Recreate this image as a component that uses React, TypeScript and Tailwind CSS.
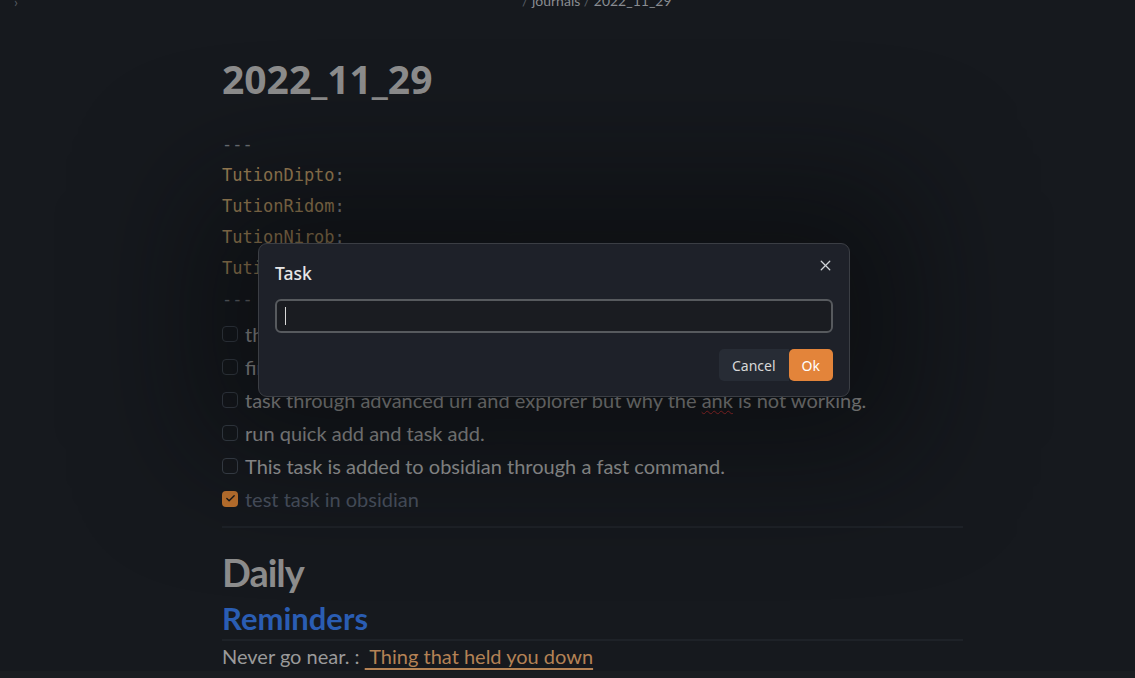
import { X, Check } from "lucide-react";

const tasks = [
  { text: "think about a few things i need to get done this week.", done: false },
  { text: "find out the best way to add tasks from the quick add.", done: false },
  { text: "task through advanced uri and explorer but why the ", tail: "is not working.", typo: "ank", done: false },
  { text: "run quick add and task add.", done: false },
  { text: "This task is added to obsidian through a fast command.", done: false },
  { text: "test task in obsidian", done: true },
];

const props = ["TutionDipto:", "TutionRidom:", "TutionNirob:", "TutionRafi:"];

function TaskRow({ t }: { t: (typeof tasks)[number] }) {
  return (
    <div className="flex h-[33px] items-center gap-[7px]">
      {t.done ? (
        <span className="flex h-[16px] w-[16px] shrink-0 items-center justify-center rounded-[4px] bg-[#c0742f]">
          <Check size={11} strokeWidth={3} className="text-[#1a1a1a]" />
        </span>
      ) : (
        <span className="h-[16px] w-[16px] shrink-0 rounded-[4px] border border-[#3b424c]" />
      )}
      <span className={t.done ? "text-[#4b5260]" : "text-[#a3a3a3]"}>
        {t.text}
        {t.typo && (
          <>
            <span className="underline decoration-wavy decoration-[#c43030] decoration-1 underline-offset-2">{t.typo}</span> {t.tail}
          </>
        )}
      </span>
    </div>
  );
}

export default function App() {
  return (
    <div className="relative h-[678px] w-[1135px] overflow-hidden bg-[#16191e] font-['Lato',sans-serif]">
      <div className="absolute left-[14px] top-[-9px] text-[14px] text-[#555b63]">›</div>
      <div className="absolute left-[522px] top-[-10px] text-[14px] text-[#8a8d92]">
        <span className="text-[#555b63]">/</span> journals <span className="text-[#555b63]">/</span> 2022_11_29
      </div>

      <div className="ml-[222px] flex w-[741px] flex-col pt-[55px]">
        <h1 className="font-['Open_Sans',sans-serif] text-[39px] font-bold leading-[48px] text-[#8d8d8d]">2022_11_29</h1>

        <div className="mt-[26px] font-['DejaVu_Sans_Mono',monospace] text-[17px] leading-[31px]">
          <div className="text-[#6f7378]">---</div>
          {props.map((p) => (
            <div key={p} className="text-[#a6885b]">
              {p.slice(0, -1)}
              <span className="text-[#8a8d92]">:</span>
            </div>
          ))}
          <div className="text-[#6f7378]">---</div>
        </div>

        <div className="mt-[2px] text-[20px]">
          {tasks.map((t, i) => (
            <TaskRow key={i} t={t} />
          ))}
        </div>

        <div className="mt-[11px] h-[2px] w-full bg-[#1e2228]" />

        <h2 className="mt-[20px] text-[38px] font-bold leading-[48px] tracking-[-1px] text-[#8d8d8d]">Daily</h2>
        <h3 className="mt-[3px] text-[31px] font-bold leading-[38px] text-[#2a5db3]">Reminders</h3>
        <div className="mt-[2px] h-[2px] w-full bg-[#1e2228]" />
        <p className="mt-[2px] text-[20px] leading-[26px] text-[#9a9a9a]">
          Never go near. :{" "}
          <span className="text-[#b48255] underline decoration-[#b48255] underline-offset-[4px]">&nbsp;Thing that held you down</span>
        </p>
      </div>

      <div className="absolute bottom-0 left-0 h-[7px] w-full bg-[#1a1d21]" />

      <div className="absolute left-[258px] top-[243px] w-[592px] rounded-[9px] border border-[#3b3e44] bg-[#1e2129] px-[16px] pb-[15px] pt-[17px] shadow-[0_0_120px_60px_rgba(8,9,11,0.55)]">
        <div className="flex items-start justify-between">
          <div className="font-['Noto_Sans',sans-serif] text-[17.5px] font-medium leading-[24px] text-[#e6e6e6]">Task</div>
          <X size={17} strokeWidth={1.8} className="mr-[-1px] mt-[-4px] text-[#cfd3d8]" />
        </div>
        <div className="mt-[14px] flex h-[34px] items-center rounded-[6px] border-2 border-[#575a5e] bg-[#1a1c21] pl-[8px]">
          <span className="h-[18px] w-[1px] bg-[#d8d8d8]" />
        </div>
        <div className="mt-[16px] flex justify-end">
          <button className="h-[32px] rounded-l-[5px] bg-[#272c35] px-[13px] font-['Noto_Sans',sans-serif] text-[14px] text-[#d8d8d8]">Cancel</button>
          <button className="h-[32px] rounded-[5px] bg-[#e3843a] px-[13px] font-['Noto_Sans',sans-serif] text-[14px] text-white">Ok</button>
        </div>
      </div>
    </div>
  );
}
